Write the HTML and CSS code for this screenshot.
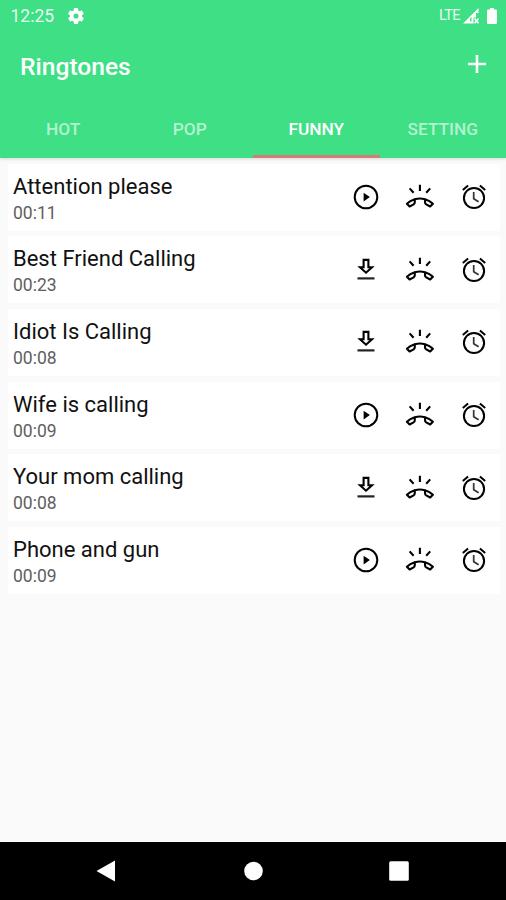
FILE: index.html
```html
<!DOCTYPE html>
<html lang="en">

<head>
    <meta charset="UTF-8">
    <meta name="viewport" content="width=device-width, initial-scale=1.0">
    <title>Ringtones</title>
    <link rel="stylesheet" href="styles.css">
</head>

<body>
    <svg class="sprite" width="0" height="0">
        <symbol id="play" viewBox="0 0 30 30">
            <circle cx="15" cy="15" r="11.3" fill="none" stroke="#000" stroke-width="2" />
            <path d="M12.6 10.7v8.8l6.3-4.4z" />
        </symbol>
        <symbol id="download" viewBox="0 0 30 30">
            <path d="M12.6 4.9h4.8v7.4h3.6l-6 5.4-6-5.4h3.6z" fill="none" stroke="#000" stroke-width="2.1" />
            <path d="M6.5 22.3h17v2.2h-17z" fill="#222" />
        </symbol>
        <symbol id="ring" viewBox="0 0 30 30">
            <g fill="none" stroke="#000" stroke-width="2.1">
                <path d="M14.9 2.8V9M4.6 6.4l4 4.4M25.2 6.4l-4 4.4" />
                <path stroke-linejoin="round" d="M9.800 17.300C6.500 18.300 3.900 19.800 1.900 21.800L4.600 24.500 8.600 22.300C9.600 21.700 9.800 20.800 9.800 20V17.300C13.200 16.300 16.600 16.300 20 17.300V20C20 20.800 20.200 21.700 21.200 22.300L25.200 24.500 27.900 21.800C25.900 19.800 23.300 18.300 20 17.300" />
            </g>
        </symbol>
        <symbol id="alarm" viewBox="0 0 30 30">
            <g fill="none" stroke="#000" stroke-width="2">
                <circle cx="15" cy="16" r="10.1" />
                <path d="M3.8 7.9l5.3-4.4M26.2 7.9l-5.3-4.4" />
                <path d="M14.7 10v6.700l4.900 3" stroke="#333" stroke-width="1.7" />
            </g>
        </symbol>
    </svg>

    <header class="header">
        <div class="status-bar">
            <span class="time">12:25</span>
            <svg class="gear" viewBox="2 2 20 20">
                <path fill="#fff" fill-rule="evenodd" d="M19.4 13a7.5 7.5 0 0 0 0-2l2.1-1.6a.5.5 0 0 0 .1-.6l-2-3.5a.5.5 0 0 0-.6-.2l-2.5 1a7.3 7.3 0 0 0-1.7-1l-.4-2.7a.5.5 0 0 0-.5-.4h-4a.5.5 0 0 0-.5.4L9 5.1a7.7 7.7 0 0 0-1.7 1l-2.5-1a.5.5 0 0 0-.6.2l-2 3.5a.5.5 0 0 0 .1.6L4.5 11a7.9 7.9 0 0 0 0 2l-2.1 1.6a.5.5 0 0 0-.1.6l2 3.5c.1.2.4.3.6.2l2.5-1a7.3 7.3 0 0 0 1.7 1l.4 2.7c0 .2.2.4.5.4h4c.3 0 .5-.2.5-.4l.4-2.7a7.7 7.7 0 0 0 1.7-1l2.5 1c.2.1.5 0 .6-.2l2-3.5a.5.5 0 0 0-.1-.6zM12 15.2a3.2 3.2 0 1 1 0-6.4 3.2 3.2 0 0 1 0 6.4z" />
            </svg>
            <span class="lte">LTE</span>
            <svg class="signal" viewBox="0 0 16 16">
                <path fill="#fff" fill-rule="evenodd" d="M0 15.5L15.500 0v5H13v4.500h-2.500v6zM9.800 7.500L7 10.500v3h1.500V9z" />
                <path stroke="#fff" stroke-width="1.6" d="M11.500 10.500l4 4.700M15.500 10.500l-4 4.700" />
            </svg>
            <svg class="battery" viewBox="0 0 10 16">
                <path fill="#fff" d="M3 0h4v1.600h2a1 1 0 0 1 1 1V15a1 1 0 0 1-1 1H1a1 1 0 0 1-1-1V2.600a1 1 0 0 1 1-1h2z" />
            </svg>
        </div>
        <div class="toolbar">
            <h1>Ringtones</h1>
            <svg class="add" viewBox="0 0 18 18">
                <path stroke="#fff" stroke-width="2.6" d="M9 0v18M0 9h18" />
            </svg>
        </div>
        <nav class="tabs">
            <a class="tab">HOT</a>
            <a class="tab">POP</a>
            <a class="tab active">FUNNY</a>
            <a class="tab">SETTING</a>
        </nav>
    </header>

    <main class="list">
        <div class="card">
            <div class="info">
                <div class="name">Attention please</div>
                <div class="length">00:11</div>
            </div>
            <svg class="icon"><use href="#play" /></svg>
            <svg class="icon"><use href="#ring" /></svg>
            <svg class="icon"><use href="#alarm" /></svg>
        </div>
        <div class="card">
            <div class="info">
                <div class="name">Best Friend Calling</div>
                <div class="length">00:23</div>
            </div>
            <svg class="icon"><use href="#download" /></svg>
            <svg class="icon"><use href="#ring" /></svg>
            <svg class="icon"><use href="#alarm" /></svg>
        </div>
        <div class="card">
            <div class="info">
                <div class="name">Idiot Is Calling</div>
                <div class="length">00:08</div>
            </div>
            <svg class="icon"><use href="#download" /></svg>
            <svg class="icon"><use href="#ring" /></svg>
            <svg class="icon"><use href="#alarm" /></svg>
        </div>
        <div class="card">
            <div class="info">
                <div class="name">Wife is calling</div>
                <div class="length">00:09</div>
            </div>
            <svg class="icon"><use href="#play" /></svg>
            <svg class="icon"><use href="#ring" /></svg>
            <svg class="icon"><use href="#alarm" /></svg>
        </div>
        <div class="card">
            <div class="info">
                <div class="name">Your mom calling</div>
                <div class="length">00:08</div>
            </div>
            <svg class="icon"><use href="#download" /></svg>
            <svg class="icon"><use href="#ring" /></svg>
            <svg class="icon"><use href="#alarm" /></svg>
        </div>
        <div class="card">
            <div class="info">
                <div class="name">Phone and gun</div>
                <div class="length">00:09</div>
            </div>
            <svg class="icon"><use href="#play" /></svg>
            <svg class="icon"><use href="#ring" /></svg>
            <svg class="icon"><use href="#alarm" /></svg>
        </div>
    </main>

    <footer class="nav-bar">
        <svg class="nav-icon" viewBox="0 0 22 22">
            <path fill="#fff" d="M1.5 11L20 .5v21z" />
        </svg>
        <svg class="nav-icon" viewBox="0 0 22 22">
            <circle fill="#fff" cx="11.500" cy="11" r="9.3" />
        </svg>
        <svg class="nav-icon" viewBox="0 0 22 22">
            <rect fill="#fff" x="1.2" y="1.2" width="19.6" height="19.6" rx="1.5" />
        </svg>
    </footer>
</body>

</html>
```

FILE: styles.css
```css
* {
    box-sizing: border-box;
}

body {
    font-family: Roboto, sans-serif;
    background-color: #fafafa;
    margin: 0;
    height: 900px;
    display: flex;
    flex-direction: column;
    overflow: hidden;
}

.sprite {
    position: absolute;
}

.header {
    height: 157.5px;
    flex-shrink: 0;
    background-color: #3fdf86;
    color: #fff;
    box-shadow: 0 1px 3px rgba(0, 0, 0, 0.15);
}

.status-bar {
    height: 31px;
    display: flex;
    align-items: center;
    padding: 0 9px 0 10.5px;
}

.time {
    width: 57.5px;
    font-size: 17.5px;
    color: #e4faee;
}

.gear {
    width: 16px;
    height: 16px;
}

.lte {
    margin-left: auto;
    font-size: 14.5px;
    letter-spacing: -0.6px;
    color: #e4faee;
}

.signal {
    width: 16px;
    height: 16px;
    margin-left: 3px;
}

.battery {
    width: 10px;
    height: 16px;
    margin-left: 8px;
}

.toolbar {
    height: 70px;
    display: flex;
    align-items: center;
    justify-content: space-between;
    padding: 0 20px;
}

h1 {
    margin: 0;
    font-size: 24.6px;
    font-weight: 500;
}

.add {
    width: 18px;
    height: 18px;
    margin-top: -4px;
}

.tabs {
    height: 56.5px;
    display: flex;
}

.tab {
    flex: 1;
    display: flex;
    align-items: center;
    justify-content: center;
    padding-top: 2px;
    font-size: 17.3px;
    font-weight: 500;
    color: #b3f2cf;
    border-bottom: 3px solid transparent;
}

.tab.active {
    color: #fff;
    border-bottom-color: #d9797c;
}

.list {
    flex: 1;
    display: flex;
    flex-direction: column;
    gap: 5.7px;
    padding: 6px 6px 0 8px;
}

.card {
    height: 67px;
    display: flex;
    align-items: center;
    gap: 24px;
    padding: 0 11px 0 5px;
    background-color: #fff;
}

.info {
    flex: 1;
    padding-top: 4px;
}

.name {
    font-size: 22px;
    line-height: 28px;
    color: #111;
}

.length {
    font-size: 17.5px;
    line-height: 25px;
    color: #606060;
}

.icon {
    width: 30px;
    height: 30px;
}

.nav-bar {
    height: 58px;
    display: flex;
    align-items: center;
    justify-content: space-between;
    padding: 0 96px 0 95px;
    background-color: #000;
}

.nav-icon {
    width: 22px;
    height: 22px;
}
```
